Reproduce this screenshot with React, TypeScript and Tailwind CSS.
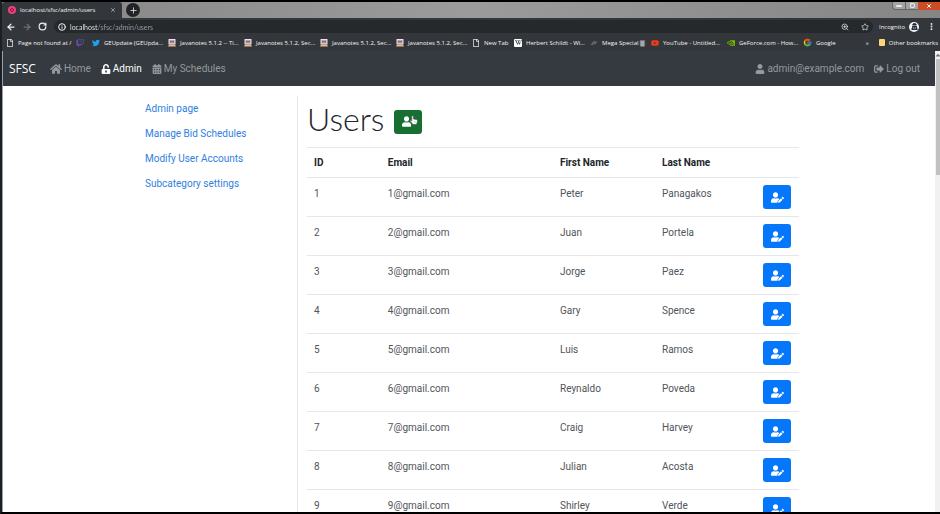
import type { ReactNode } from "react";
import {
  FaHome, FaUnlockAlt, FaCalendarAlt, FaUser, FaSignOutAlt, FaUserEdit, FaTwitch, FaTwitter, FaYoutube,
  FaWikipediaW, FaRegFile, FaUserSecret, FaUserPlus, FaCaretUp,
} from "react-icons/fa";
import { FcGoogle } from "react-icons/fc";
import { SiNvidia } from "react-icons/si";
import { ArrowLeft, ArrowRight, RotateCw, Info, X, Plus, Star, ZoomIn, EllipsisVertical, Minus, Square } from "lucide-react";

function JavaIcon() {
  return (
    <svg viewBox="0 0 16 16" className="size-2 shrink-0">
      <rect x="1" y="0" width="14" height="11" rx="1" fill="#e9e4ea" />
      <rect x="3" y="2" width="10" height="7" fill="#a9a3c4" />
      <path d="M4 4h3v3H4zM9 4h3v3H9z" fill="#c23a3a" />
      <path d="M2 11h12l2 4H0z" fill="#e3b98c" />
    </svg>
  );
}

function MegaIcon() {
  return (
    <svg viewBox="0 0 16 12" className="h-1.5 w-2 shrink-0">
      <path d="M1 9 8 2h3L5 10zM7 9l5-6h3l-5 6z" fill="#6c7385" />
    </svg>
  );
}

function PointerIcon() {
  return (
    <svg viewBox="0 0 16 20" className="absolute top-1 left-4 h-3 w-2">
      <path
        d="M5 1.5c1.2 0 2 .8 2 2V8l6.200 1.200c1.200.3 1.800 1 1.800 2.200l-.8 4.600-1.700 3H6L1 13c-.6-1 .6-2.200 1.800-1.500L3.500 12V3.500c0-1.200.6-2 1.500-2z"
        fill="#fff"
        stroke="#45504a"
        strokeWidth="1.200"
      />
      <path d="M10 12v4" stroke="#8a948e" strokeWidth="1" />
    </svg>
  );
}

function Wiki() {
  return (
    <span className="flex size-2 shrink-0 items-center justify-center rounded-[1px] bg-white text-black">
      <FaWikipediaW size={7} />
    </span>
  );
}

const page = <FaRegFile size={8} className="shrink-0 text-gray-200" />;

const bookmarks: { icon: ReactNode; label: string; width: string }[] = [
  { icon: page, label: "Page not found at /", width: "w-[70px]" },
  { icon: <FaTwitch size={8} color="#6b4bb5" />, label: "", width: "w-4" },
  { icon: <FaTwitter size={8} color="#1da1f2" className="shrink-0" />, label: "GEUpdate (GEUpda...", width: "w-[76px]" },
  { icon: <JavaIcon />, label: "Javanotes 5.1.2 -- Ti...", width: "w-[76px]" },
  { icon: <JavaIcon />, label: "Javanotes 5.1.2, Sec...", width: "w-[76px]" },
  { icon: <JavaIcon />, label: "Javanotes 5.1.2, Sec...", width: "w-[76px]" },
  { icon: <JavaIcon />, label: "Javanotes 5.1.2, Sec...", width: "w-[76px]" },
  { icon: page, label: "New Tab", width: "w-[42px]" },
  { icon: <Wiki />, label: "Herbert Schildt - Wi...", width: "w-[76px]" },
  { icon: <MegaIcon />, label: "Mega Special 🀫", width: "w-[61px]" },
  { icon: <FaYoutube size={8} color="#f03a17" className="shrink-0" />, label: "YouTube - Untitled...", width: "w-[76px]" },
  { icon: <SiNvidia size={8} color="#76b900" className="shrink-0" />, label: "GeForce.com - How...", width: "w-[76px]" },
  { icon: <FcGoogle size={9} className="shrink-0" />, label: "Google", width: "w-[40px]" },
];

const users = [
  ["Peter", "Panagakos"],
  ["Juan", "Portela"],
  ["Jorge", "Paez"],
  ["Gary", "Spence"],
  ["Luis", "Ramos"],
  ["Reynaldo", "Poveda"],
  ["Craig", "Harvey"],
  ["Julian", "Acosta"],
  ["Shirley", "Verde"],
];

function BrowserChrome() {
  return (
    <header className="shrink-0 bg-[#33373b] font-['Open_Sans','Noto_Sans',sans-serif] text-[6px] text-gray-100">
      <div className="flex h-4 items-stretch bg-linear-to-r from-[#858585] via-[#9b9b9b] to-[#858585]">
        <div className="flex w-[120px] items-center gap-1 rounded-t-[3px] bg-[#33373b] px-1.5">
          <span className="flex size-2 items-center justify-center rounded-full bg-[#ec407a]">
            <span className="size-1 rounded-full border border-[#7c1e42]" />
          </span>
          <span className="flex-1">localhost/sfsc/admin/users</span>
          <button aria-label="Close tab"><X size={6} /></button>
        </div>
        <button aria-label="New tab" className="ml-1 flex size-3.5 items-center justify-center self-center rounded-full bg-[#222528]">
          <Plus size={9} />
        </button>
        <div className="ml-auto flex h-2 items-stretch text-white">
          <button aria-label="Minimize" className="flex w-3.5 items-center justify-center rounded-bl-sm border border-t-0 border-[#666] bg-[#a3a3a3]"><Minus size={8} strokeWidth={4} /></button>
          <button aria-label="Restore" className="flex w-3 items-center justify-center border-b border-[#666] bg-[#a3a3a3]"><Square size={5} strokeWidth={4} /></button>
          <button aria-label="Close" className="flex w-[22px] items-center justify-center rounded-bl-[1px] bg-[#cf4b25]"><X size={6} strokeWidth={4} /></button>
        </div>
      </div>
      <div className="flex h-[17px] items-center pr-1 pl-0.5">
        <div className="flex w-[50px] items-center gap-1.5 pl-0.5">
          <button aria-label="Back"><ArrowLeft size={10} strokeWidth={3} /></button>
          <button aria-label="Forward" className="text-gray-500"><ArrowRight size={10} strokeWidth={3} /></button>
          <button aria-label="Reload"><RotateCw size={9} strokeWidth={3} /></button>
        </div>
        <div className="flex h-[13px] flex-1 items-center gap-1 rounded-full bg-[#26292c] px-1">
          <Info size={8} strokeWidth={3} />
          <input
            aria-label="Address"
            defaultValue="localhost/sfsc/admin/users"
            className="min-w-0 flex-1 bg-linear-to-r from-gray-100 from-[28px] to-gray-400 to-[28px] bg-clip-text font-['Lato'] text-[7px] leading-3 text-transparent outline-none"
          />
          <button aria-label="Zoom" className="mr-2"><ZoomIn size={8} /></button>
          <button aria-label="Bookmark this page"><Star size={8} /></button>
        </div>
        <div className="ml-1.5 flex items-center gap-1">
          <span>Incognito</span>
          <span className="flex size-2.5 items-center justify-center rounded-full bg-gray-100 text-gray-800"><FaUserSecret size={7} /></span>
          <button aria-label="Menu" className="ml-1"><EllipsisVertical size={9} strokeWidth={3} /></button>
        </div>
      </div>
      <nav aria-label="Bookmarks" className="flex h-4 items-center justify-between pr-0.5 pb-px pl-1">
        <div className="flex flex-1 items-center">
          {bookmarks.map((b, i) => (
            <a key={i} href="#" aria-label={b.label || "Twitch"} className={`flex shrink-0 items-center gap-1 whitespace-nowrap ${b.width}`}>
              {b.icon}
              {b.label}
            </a>
          ))}
        </div>
        <div className="flex items-center gap-2.5">
          <button aria-label="More bookmarks">»</button>
          <button className="flex items-center gap-1">
            <span className="h-[7px] w-1.5 rounded-[1px] bg-[#fbd576]" />
            Other bookmarks
          </button>
        </div>
      </nav>
    </header>
  );
}

function NavItem({ icon, label, active }: { icon: ReactNode; label: string; active?: boolean }) {
  return (
    <a href="#" className={`flex items-center gap-0.5 ${active ? "text-white" : "text-[#96999c]"}`}>
      {icon}
      {label}
    </a>
  );
}

export default function App() {
  return (
    <div className="flex h-screen flex-col overflow-hidden border-y-2 border-l-2 border-black border-l-[#1d2022] bg-white font-['Roboto','Open_Sans',sans-serif] text-[10px] leading-4">
      <BrowserChrome />
      <div className="flex min-h-0 flex-1">
        <div className="min-w-0 flex-1 overflow-hidden border-l border-gray-400">
          <nav className="flex h-[35px] items-center gap-2.5 bg-[#343a40] pr-[15px] pl-1.5">
            <a href="#" className="mr-1 font-['Open_Sans'] text-[12px] text-white">SFSC</a>
            <NavItem icon={<FaHome size={12} />} label="Home" />
            <NavItem icon={<FaUnlockAlt size={10} />} label="Admin" active />
            <NavItem icon={<FaCalendarAlt size={10} />} label="My Schedules" />
            <div className="ml-auto flex gap-2.5">
              <NavItem icon={<FaUser size={10} />} label="admin@example.com" />
              <NavItem icon={<FaSignOutAlt size={10} />} label="Log out" />
            </div>
          </nav>
          <div className="mx-auto flex max-w-[660px] pt-2.5">
            <aside className="flex h-[600px] w-[159px] shrink-0 flex-col gap-[9px] border-r border-gray-200 pt-[5px] pl-1.5 text-[#2f80df]">
              <a href="#">Admin page</a>
              <a href="#">Manage Bid Schedules</a>
              <a href="#">Modify User Accounts</a>
              <a href="#">Subcategory settings</a>
            </aside>
            <main className="min-w-0 flex-1 pl-[9px]">
              <div className="flex h-[51px] items-center gap-2.5">
                <h1 className="pb-1.5 font-['Lato'] text-[32px] leading-[44px] font-light text-[#212529]">Users</h1>
                <button aria-label="Add user" className="relative flex h-6 w-7 items-center justify-center rounded-[3px] bg-[#176f32] text-white">
                  <FaUserPlus size={13} />
                  <PointerIcon />
                </button>
              </div>
              <table className="w-full table-fixed border-collapse text-left text-[#50555a]">
                <colgroup>
                  <col className="w-[15%]" />
                  <col className="w-[35%]" />
                  <col className="w-[102px]" />
                  <col />
                  <col className="w-[43px]" />
                </colgroup>
                <thead>
                  <tr className="h-[30px] border-y border-gray-200 text-[#212529]">
                    <th className="px-[7px]">ID</th>
                    <th className="px-[7px]">Email</th>
                    <th className="px-[7px]">First Name</th>
                    <th className="px-[7px]">Last Name</th>
                    <th aria-label="Actions" />
                  </tr>
                </thead>
                <tbody>
                  {users.map(([first, last], i) => (
                    <tr key={i} className="h-[39px] border-b border-gray-200 align-top">
                      <td className="px-[7px] pt-2">{i + 1}</td>
                      <td className="px-[7px] pt-2">{i + 1}@gmail.com</td>
                      <td className="px-[7px] pt-2">{first}</td>
                      <td className="px-[7px] pt-2">{last}</td>
                      <td className="px-[7px] pt-[7px]">
                        <button aria-label={`Edit ${first} ${last}`} className="flex h-6 w-7 items-center justify-center rounded-[3px] bg-[#0577fb] text-white">
                          <FaUserEdit size={13} />
                        </button>
                      </td>
                    </tr>
                  ))}
                </tbody>
              </table>
            </main>
          </div>
        </div>
        <div className="flex w-[5px] shrink-0 flex-col items-center bg-[#f1f1f1]">
          <FaCaretUp size={6} color="#777" className="h-2" />
          <div className="h-[116px] w-1 bg-[#c1c1c1]" />
        </div>
      </div>
    </div>
  );
}
